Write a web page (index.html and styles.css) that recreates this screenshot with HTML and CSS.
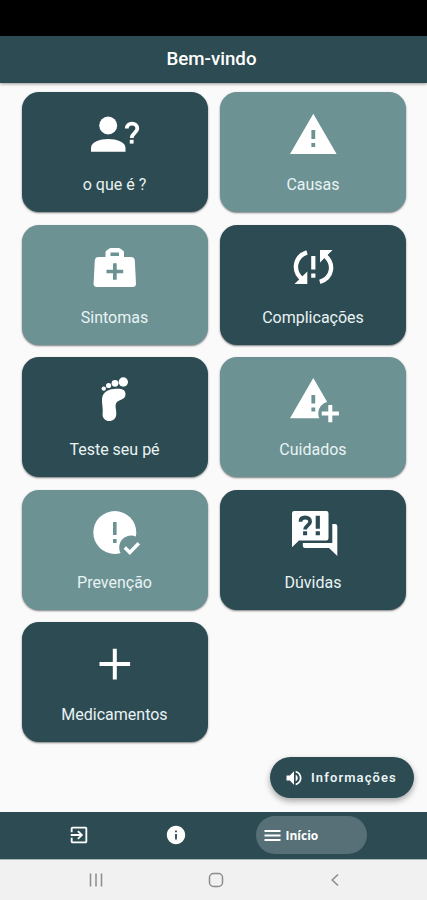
FILE: index.html
```html
<!DOCTYPE html>
<html lang="pt-BR">
<head>
    <meta charset="UTF-8">
    <meta name="viewport" content="width=device-width, initial-scale=1.0">
    <title>Bem-vindo</title>
    <link rel="stylesheet" href="styles.css">
</head>
<body>
    <div class="status-bar"></div>
    <header class="app-bar">
        <h1>Bem-vindo</h1>
    </header>
    <main>
        <div class="menu">
            <a class="card">
                <svg class="icon" viewBox="0 -2 70 60">
                    <circle cx="28.2" cy="20.5" r="9"/>
                    <path d="M11 46.7V43C11 36.8 20 34 28.2 34s17.3 2.8 17.3 9v3.7z"/>
                    <path class="line" stroke-width="3.8" d="M46.8 23.6c0-3.200 2.300-5 5.200-5s5.300 1.900 5.300 5c0 4-5.600 4.600-5.600 9.400"/>
                    <rect x="49.800" y="34.800" width="3.800" height="3.800"/>
                </svg>
                <span>o que é ?</span>
            </a>
            <a class="card light">
                <svg class="icon" viewBox="-2 -2 70 60">
                    <path d="M33.3 8.7 10 49h46.6z"/>
                    <path class="cut" d="M31.4 25h3.8v9h-3.8zM31.4 38h3.8v4h-3.8z"/>
                </svg>
                <span>Causas</span>
            </a>
            <a class="card light">
                <svg class="icon" viewBox="0 -2 70 60">
                    <path d="M25.5 19v-4.500q0-1 .8-1.800L29 10.700q.8-.7 1.800-.7h7.900q1 0 1.800.7l2.700 2q.8.8.8 1.800V19H51q3.400 0 3.800 3.400l1.200 23q.2 3.600-3.600 3.600H17.200q-3.800 0-3.600-3.600l1.200-23Q15.200 19 18.600 19z"/>
                    <path class="cut" d="M30.5 14.600H39V18h-8.500zM33 25.200h3.700v6.500h6.500v3.600h-6.500v6.500H33v-6.500h-6.500v-3.600H33z"/>
                </svg>
                <span>Sintomas</span>
            </a>
            <a class="card">
                <svg class="icon" viewBox="-2 -2 70 60">
                    <path class="line" stroke-width="4.4" d="M27 14.300C14.500 18.500 12 33 22.500 41.500M39.800 43.800C52.500 40 55 26 44.500 17"/>
                    <path d="M14.500 46h12.800V33.500zM52.500 12H40v12.500zM31.200 18h4.200v13.500h-4.200zM31.200 35.500h4.200v4.200h-4.200z"/>
                </svg>
                <span>Complicações</span>
            </a>
            <a class="card">
                <svg class="icon" viewBox="0 0 70 60">
                    <circle cx="43.300" cy="14" r="4.700"/>
                    <circle cx="35" cy="15.300" r="3.400"/>
                    <circle cx="28.600" cy="17.500" r="2.600"/>
                    <circle cx="23.800" cy="20.600" r="2.200"/>
                    <path d="M22 32c0-6.500 4.500-10.500 12-11 8-.8 11.500 1 11.500 5.200 0 6.300-7.500 4.800-9.400 9-1.400 3.600.6 6.800.2 11C36 50.600 33 53 29.300 53s-7.100-2.700-6.700-7c.6-5.500-.6-8.500-.6-14z"/>
                </svg>
                <span>Teste seu pé</span>
            </a>
            <a class="card light">
                <svg class="icon" viewBox="-2 0 70 60">
                    <path d="M33.3 10 10 50.300h46.600z"/>
                    <path class="cut" d="M31.400 27h3.800v8.500h-3.800zM31.400 39.500h3.800v4h-3.800z"/>
                    <circle class="cut" cx="50.300" cy="45.500" r="12"/>
                    <path d="M48.300 37h4v6.600h6.600v4h-6.600v6.600h-4v-6.600h-6.600v-4h6.600z"/>
                </svg>
                <span>Cuidados</span>
            </a>
            <a class="card light">
                <svg class="icon" viewBox="0 0 70 60">
                    <circle cx="34.800" cy="31.500" r="21.500"/>
                    <path class="cut" d="M33 21h3.600v13H33zM33 38h3.600v4H33z"/>
                    <circle class="cut" cx="51.200" cy="46.600" r="12"/>
                    <path class="line" stroke-width="3.400" d="m44.800 46.500 5 5 9-9.300"/>
                </svg>
                <span>Prevenção</span>
            </a>
            <a class="card">
                <svg class="icon" viewBox="-2 0 70 60">
                    <path d="M14.300 10h32q2.200 0 2.200 2.200v25q0 2.200-2.200 2.200H19L12 46.200v-34Q12 10 14.300 10z"/>
                    <path d="M52.300 23H55q2.300 0 2.300 2.300V55l-8.300-8H25q-2.200 0-2.200-2.200v-2.700h29.500z"/>
                    <path class="line dark" stroke-width="3.800" d="M20.500 20.800c0-2.900 2-4.300 4.700-4.300s4.900 1.500 4.900 4.200c0 3.500-5 3.900-5 7.900"/>
                    <path class="cut" d="M23.100 30.300h4v3.900h-4zM35.700 14.800h4.200v13h-4.200zM35.700 30.300h4.200v3.900h-4.200z"/>
                </svg>
                <span>Dúvidas</span>
            </a>
            <a class="card">
                <svg class="icon" viewBox="0 0 70 60">
                    <path d="M32.800 15.800h4v13.300h13.300v4H36.800v13.300h-4V33.100H19.500v-4h13.300z"/>
                </svg>
                <span>Medicamentos</span>
            </a>
        </div>
        <button class="info-btn">
            <svg width="20" height="20" viewBox="0 0 24 24">
                <path d="M3 9v6h4l5 5V4L7 9H3zm13.500 3c0-1.770-1.020-3.290-2.500-4.030v8.050c1.480-.73 2.500-2.250 2.500-4.020zM14 3.230v2.060c2.890.86 5 3.540 5 6.710s-2.110 5.850-5 6.710v2.060c4.010-.91 7-4.490 7-8.770s-2.990-7.860-7-8.770z"/>
            </svg>
            Informações
        </button>
    </main>
    <nav class="tabs">
        <a class="tab">
            <svg width="22" height="22" viewBox="0 0 24 24">
                <path d="M10.090 15.590 11.500 17l5-5-5-5-1.410 1.410L12.670 11H3v2h9.670l-2.580 2.590zM19 3H5c-1.110 0-2 .9-2 2v4h2V5h14v14H5v-4H3v4c0 1.100.89 2 2 2h14c1.100 0 2-.9 2-2V5c0-1.100-.9-2-2-2z"/>
            </svg>
        </a>
        <a class="tab">
            <svg width="22" height="22" viewBox="0 0 24 24">
                <path d="M12 2C6.480 2 2 6.480 2 12s4.480 10 10 10 10-4.480 10-10S17.520 2 12 2zm1 15h-2v-6h2v6zm0-8h-2V7h2v2z"/>
            </svg>
        </a>
        <a class="tab active">
            <svg width="17" height="13" viewBox="0 0 17 13">
                <path d="M.5 1h16v2H.5zM.5 5.500h16v2H.5zM.5 10h16v2H.5z"/>
            </svg>
            Início
        </a>
    </nav>
    <footer class="system-bar">
        <svg width="14" height="14" viewBox="0 0 14 14"><path d="M1.500.5v13M7 .5v13M12.500.5v13"/></svg>
        <svg width="16" height="16" viewBox="0 0 16 16"><rect x="1.500" y="1.500" width="13" height="13" rx="4"/></svg>
        <svg width="10" height="14" viewBox="0 0 10 14"><path d="M8 1.500 2.200 7 8 12.500"/></svg>
    </footer>
</body>
</html>
```
FILE: styles.css
```css
* {
    box-sizing: border-box;
}

body {
    margin: 0;
    height: 900px;
    display: flex;
    flex-direction: column;
    font-family: Roboto, "Liberation Sans", sans-serif;
    background: #fafafa;
    color: white;
}

svg {
    fill: white;
    flex: none;
}

.status-bar {
    height: 36px;
    background: black;
}

.app-bar {
    height: 47px;
    display: flex;
    align-items: center;
    justify-content: center;
    background: #2d4b52;
    box-shadow: 0 1px 3px rgba(0, 0, 0, 0.4);
}

h1 {
    margin: 0;
    padding: 0 4px 1px 0;
    font-size: 18.7px;
    font-weight: 500;
}

main {
    flex: 1;
    display: flex;
    flex-direction: column;
    padding: 9px 13px 0 21.5px;
}

.menu {
    display: grid;
    grid-template-columns: 186px 186px;
    grid-auto-rows: 120px;
    gap: 12.5px;
}

.card {
    --bg: #2d4b52;
    display: flex;
    flex-direction: column;
    align-items: center;
    padding-top: 11px;
    border-radius: 17px;
    background: var(--bg);
    box-shadow: 0 1px 2px rgba(0, 0, 0, 0.5);
    font-size: 16px;
    line-height: 20px;
}

.card.light {
    --bg: #6c9293;
}

.card span {
    margin-top: 12px;
    color: #e9f3f4;
}

.icon {
    width: 70px;
    height: 60px;
}

.cut {
    fill: var(--bg);
}

.line {
    fill: none;
    stroke: white;
}

.line.dark {
    stroke: var(--bg);
}

.info-btn {
    align-self: flex-end;
    display: flex;
    align-items: center;
    gap: 7px;
    width: 144px;
    height: 41px;
    margin-top: 15px;
    padding: 0 0 0 14px;
    border: none;
    border-radius: 21px;
    background: #2d4b52;
    box-shadow: 0 3px 6px rgba(0, 0, 0, 0.35);
    color: #e9f3f4;
    font-family: inherit;
    font-size: 13px;
    font-weight: 600;
    letter-spacing: 1.1px;
}

.tabs {
    height: 48px;
    display: flex;
    align-items: center;
    padding: 0 0 1px 67.5px;
    background: #2d4b52;
    border-bottom: 1px solid #a9b6b8;
}

.tab {
    display: flex;
    align-items: center;
    margin-right: 75px;
}

.tab.active {
    width: 111px;
    height: 38px;
    margin: 0 0 0 -6px;
    padding-left: 8px;
    gap: 5px;
    border-radius: 19px;
    background: #577078;
    font-family: "Open Sans", sans-serif;
    font-size: 12px;
    font-weight: 700;
}

.system-bar {
    height: 40px;
    display: flex;
    align-items: center;
    padding-left: 89px;
    background: #f1f1f1;
}

.system-bar svg {
    fill: none;
    stroke: #8c8c8c;
    stroke-width: 1.5;
    margin-right: 104.5px;
}

.system-bar svg:nth-child(2) {
    margin-right: 106px;
}
```
